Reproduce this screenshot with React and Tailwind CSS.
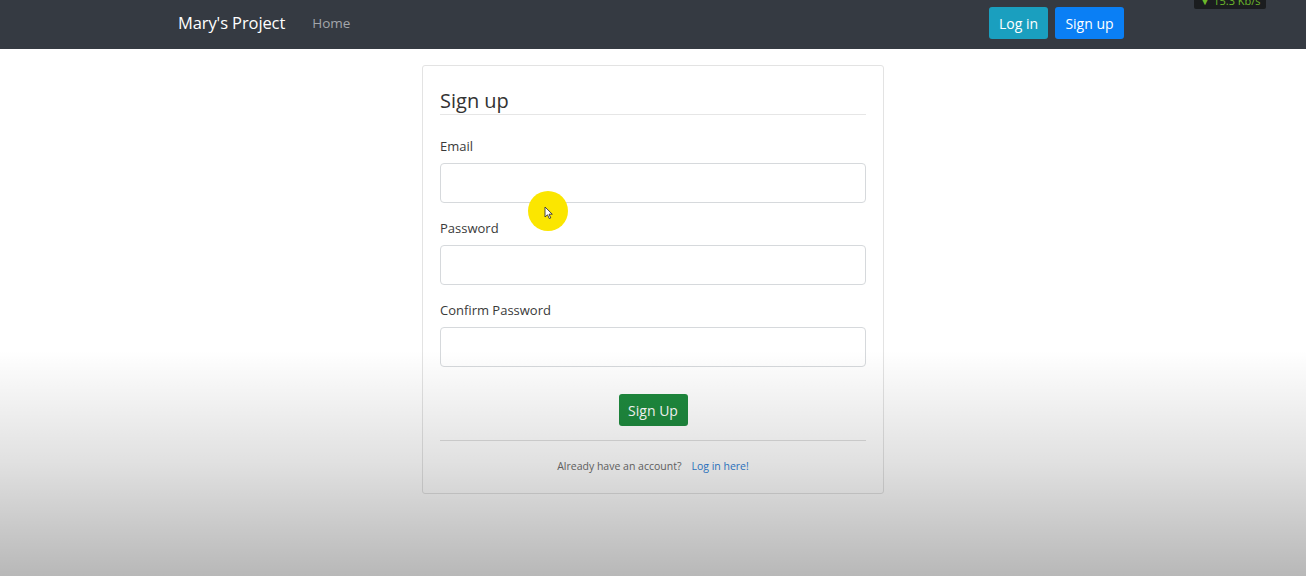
import React from "react";

const font = { fontFamily: '"Open Sans", "Noto Sans", sans-serif' };

function Field({ label, type }) {
  return (
    <div className="flex flex-col">
      <label className="text-[13px] leading-[20px] text-[#3a3a3a] mb-[7px]">{label}</label>
      <input
        type={type}
        className="h-[40px] w-full rounded-[4px] border border-[#d6d9dc] bg-white px-3 outline-none"
      />
    </div>
  );
}

export default function App() {
  return (
    <div className="relative h-[576px] w-[1306px] overflow-hidden bg-white" style={font}>
      {/* Navbar */}
      <nav className="h-[49px] bg-[#353a42]">
        <div className="ml-[178px] flex h-full w-[946px] items-center pb-[3px]">
          <span className="text-[16.5px] text-white tracking-[-0.1px]">Mary's Project</span>
          <span className="ml-[27px] text-[13.5px] text-[#a3a6ab]">Home</span>
          <div className="ml-auto flex gap-[7px]">
            <button className="h-[32px] w-[59px] rounded-[3px] bg-[#1a9fbf] text-[14px] text-white">Log in</button>
            <button className="h-[32px] w-[69px] rounded-[3px] bg-[#0a7ff5] text-[14px] text-white">Sign up</button>
          </div>
        </div>
      </nav>

      {/* Card */}
      <div className="mx-auto mt-[16px] w-[462px] rounded-[3px] border border-[#e3e3e3] px-[17px] pt-[22px] pb-[19px]">
        <h2 className="text-[20px] leading-[26px] text-[#333]">Sign up</h2>
        <div className="h-px bg-[#e6e6e6]" />
        <div className="mt-[21px] flex flex-col gap-[15px]">
          <Field label="Email" type="email" />
          <Field label="Password" type="password" />
          <Field label="Confirm Password" type="password" />
        </div>
        <div className="mt-[27px] flex justify-center">
          <button className="h-[32px] w-[69px] rounded-[3px] bg-[#1e8a3e] text-[14px] text-white">Sign Up</button>
        </div>
        <div className="mt-[14px] h-px bg-[#dedede]" />
        <p className="mt-[17px] text-center text-[10.5px] leading-[16px] text-[#6c6c6c]">
          Already have an account?<span className="ml-[10px] text-[#2f7fd6]">Log in here!</span>
        </p>
      </div>

      {/* video shading overlay */}
      <div className="pointer-events-none absolute left-0 top-[350px] h-[226px] w-full bg-gradient-to-b from-black/0 via-black/[0.12] to-black/[0.28]" />

      {/* cursor highlight */}
      <div className="pointer-events-none absolute left-[528px] top-[191px] flex h-[40px] w-[40px] items-center justify-center rounded-full bg-[#fbe600]">
        <svg width="10" height="14" viewBox="0 0 10 14" className="ml-[1px] mt-[4px]">
          <path d="M1 1 L1 11 L3.5 8.8 L5.3 12.6 L6.8 11.9 L5 8.2 L8.3 8.2 Z" fill="white" stroke="#333" strokeWidth="0.9" />
        </svg>
      </div>

      {/* network badge */}
      <div className="absolute left-[1194px] top-[-7px] flex h-[16px] w-[72px] items-center justify-center rounded-[2px] bg-[#1b1d1f] text-[11px] leading-[16px] text-[#6bb82a]">
        ▼ 15.3 Kb/s
      </div>
    </div>
  );
}
